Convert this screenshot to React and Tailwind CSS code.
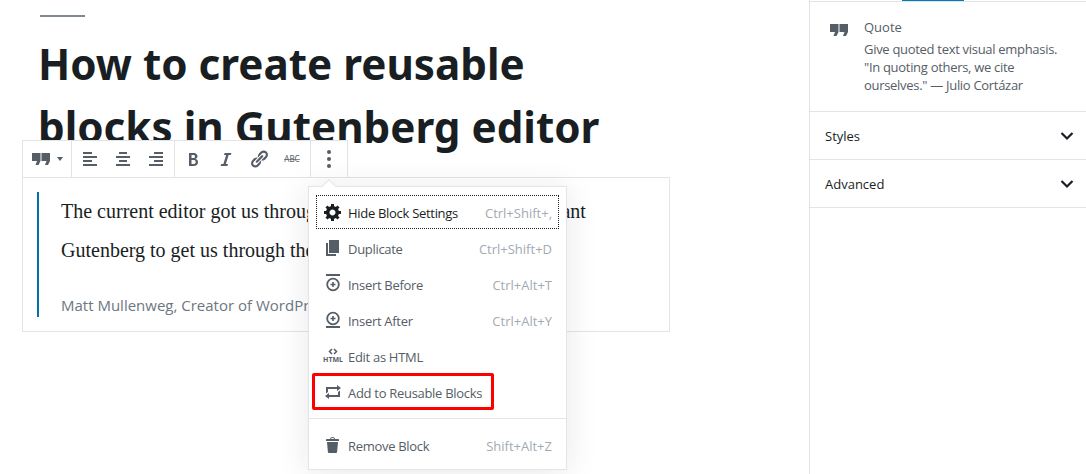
const Dash = ({ d, className = 'w-5 h-5 text-[#555d66]' }) => (
  <svg viewBox="0 0 20 20" className={className} fill="currentColor">
    <path d={d} />
  </svg>
);

const QUOTE = 'M1 4h8.5v8L7.5 16H4.5l1.5-4H1zM10.5 4H19v8l-2 4h-3l1.5-4h-5z';
const ALIGN_LEFT = 'M3 3h9v2H3zM3 7h14v2H3zM3 11h9v2H3zM3 15h14v2H3z';
const ALIGN_CENTER = 'M6 3h8v2H6zM3 7h14v2H3zM6 11h8v2H6zM3 15h14v2H3z';
const ALIGN_RIGHT = 'M8 3h9v2H8zM3 7h14v2H3zM8 11h9v2H8zM3 15h14v2H3z';
const BOLD = 'M6 4v13h4.54c1.37 0 2.46-.33 3.27-1 .8-.66 1.2-1.58 1.2-2.77 0-.84-.24-1.55-.72-2.12-.48-.56-1.13-.91-1.96-1.04v-.07c.63-.15 1.15-.47 1.55-.96.4-.49.6-1.08.6-1.78 0-.97-.36-1.7-1.07-2.2C12.7 4.02 11.9 4 10.7 4H6zm2.5 5.02V6h1.6c.87 0 1.9.16 1.9 1.47 0 1.14-.74 1.55-1.7 1.55H8.5zm0 5.98v-4h2c1.1 0 2.2.45 2.2 2 0 1.5-1 2-2.2 2h-2z';
const ITALIC = 'M14.78 6h-2.13l-2.8 9h2.12l-.62 2H4.6l.62-2h2.14l2.8-9H8.03l.62-2h6.75z';
const LINK = 'M17.74 2.76c1.68 1.69 1.68 4.41 0 6.1l-1.53 1.52c-1.12 1.12-2.7 1.47-4.14 1.09l2.62-2.61.76-.77.76-.76c.84-.84.84-2.2 0-3.04-.84-.85-2.2-.85-3.04 0l-.77.76-3.38 3.38c-.37-1.44-.02-3.02 1.1-4.14l1.52-1.53c1.69-1.68 4.42-1.68 6.1 0zM8.59 13.43l5.34-5.34c.42-.42.42-1.1 0-1.52-.44-.43-1.13-.39-1.53 0l-5.33 5.34c-.42.42-.42 1.1 0 1.52.44.43 1.13.39 1.52 0zm-.76 2.29l4.14-4.15c.38 1.44.03 3.02-1.09 4.14l-1.52 1.53c-1.69 1.68-4.41 1.68-6.1 0-1.68-1.68-1.68-4.42 0-6.1l1.53-1.52c1.12-1.12 2.7-1.47 4.14-1.1l-4.14 4.15c-.85.84-.85 2.2 0 3.05.84.84 2.2.84 3.04 0z';
const GEAR = 'M18 12h-2.18c-.17.7-.44 1.35-.81 1.93l1.54 1.54-2.1 2.1-1.54-1.54c-.58.36-1.23.63-1.91.79V19H8v-2.18c-.68-.16-1.33-.43-1.91-.79l-1.54 1.54-2.12-2.12 1.54-1.54c-.36-.58-.63-1.23-.79-1.91H1V9.03h2.17c.16-.7.44-1.35.8-1.94L2.43 5.55l2.1-2.1 1.54 1.54c.58-.37 1.24-.64 1.93-.81V2h3v2.18c.68.16 1.33.43 1.91.79l1.54-1.54 2.12 2.12-1.54 1.54c.36.59.64 1.24.8 1.94H18V12zm-8.5 1.5c1.66 0 3-1.34 3-3s-1.34-3-3-3-3 1.34-3 3 1.34 3 3 3z';
const DUPLICATE = 'M6 15V2h10v13H6zm-1 1h8v2H3V5h2v11z';
const REPEAT = 'M5 7v3l-2 1.5V5h11V3l4 3.01L14 9V7H5zm10 6v-3l2-1.5V15H6v2l-4-3.01L6 11v2h9z';
const TRASH = 'M12 4h3c.6 0 1 .4 1 1v1H3V5c0-.6.5-1 1-1h3c.2-1.1 1.3-2 2.5-2s2.3.9 2.5 2zM8 4h3c-.2-.6-.9-1-1.5-1S8.2 3.4 8 4zM4 7h11l-.9 10.1c0 .5-.5.9-1 .9H5.9c-.5 0-.9-.4-1-.9L4 7z';

const InsertIcon = ({ after }) => (
  <svg viewBox="0 0 20 20" className="w-5 h-5 text-[#555d66]" fill="none" stroke="currentColor">
    <path d={after ? 'M3 17h14' : 'M3 1h14'} strokeWidth="2" />
    <circle cx="10" cy={after ? 8.5 : 10.5} r="5.8" strokeWidth="1.8" />
    <path d={after ? 'M10 6v5M7.5 8.5h5' : 'M10 8v5M7.5 10.5h5'} strokeWidth="1.6" />
  </svg>
);

const HtmlIcon = () => (
  <svg viewBox="0 0 20 20" className="w-5 h-5 text-[#555d66]" fill="none" stroke="currentColor">
    <path d="M9 3L6.5 5.5 9 8M11 3l2.5 2.5L11 8" strokeWidth="1.5" />
    <text x="10" y="15.5" textAnchor="middle" fontSize="7" fontWeight="700" fill="currentColor" stroke="none" fontFamily="'Noto Sans', sans-serif">HTML</text>
  </svg>
);

const StrikeIcon = () => (
  <svg viewBox="0 0 20 20" className="w-5 h-5 text-[#555d66]" fill="currentColor">
    <text x="10" y="13" textAnchor="middle" fontSize="8" fontFamily="'Noto Sans', sans-serif">ABC</text>
    <path d="M2 10h16v.7H2z" />
  </svg>
);

const Chevron = () => (
  <svg viewBox="0 0 20 20" className="w-5 h-5 text-[#191e23]" fill="none" stroke="currentColor">
    <path d="M4.5 7l5.5 5.5L15.5 7" strokeWidth="2.2" />
  </svg>
);

const ToolButton = ({ d }) => (
  <div className="w-[33px] flex items-center justify-center">
    <Dash d={d} />
  </div>
);

const MenuItem = ({ icon, label, shortcut, focused }) => (
  <div
    className={`h-[34px] mb-[2px] mx-[7px] pl-[6px] pr-[6px] flex items-center border border-dotted ${
      focused ? 'border-[#191e23] text-[#191e23]' : 'border-transparent text-[#555d66]'
    }`}
  >
    <span className="w-5 h-5 flex items-center justify-center">{icon}</span>
    <span className="ml-[5px] pt-[2px] tracking-[-0.3px]">{label}</span>
    {shortcut && <span className="ml-auto pt-[2px] text-[#a2aab2]">{shortcut}</span>}
  </div>
);

const BlockMenu = () => (
  <div className="absolute left-[286px] top-[46px] w-[259px] bg-white border border-[#e2e4e7] shadow-[0_3px_30px_rgba(25,30,35,0.1)] text-[13px] leading-[18px]">
    <div className="absolute left-[15px] -top-[6px] w-[10px] h-[10px] rotate-45 bg-white border-l border-t border-[#e2e4e7]" />
    <div className="pt-[8px] pb-[7px] border-b border-[#e2e4e7]">
      <MenuItem focused icon={<Dash d={GEAR} className="w-5 h-5 text-[#191e23]" />} label="Hide Block Settings" shortcut="Ctrl+Shift+," />
      <MenuItem icon={<Dash d={DUPLICATE} />} label="Duplicate" shortcut="Ctrl+Shift+D" />
      <MenuItem icon={<InsertIcon />} label="Insert Before" shortcut="Ctrl+Alt+T" />
      <MenuItem icon={<InsertIcon after />} label="Insert After" shortcut="Ctrl+Alt+Y" />
      <MenuItem icon={<HtmlIcon />} label="Edit as HTML" />
      <MenuItem icon={<Dash d={REPEAT} />} label="Add to Reusable Blocks" />
    </div>
    <div className="pt-[9px] pb-[5px]">
      <MenuItem icon={<Dash d={TRASH} />} label="Remove Block" shortcut="Shift+Alt+Z" />
    </div>
    {/* red highlight from the screenshot annotation */}
    <div className="absolute left-[3px] top-[186px] w-[182px] h-[37px] border-[3px] border-[#ff0000] rounded-[2px]" />
  </div>
);

export default function App() {
  return (
    <div className="flex h-[474px] w-[1086px] overflow-hidden bg-white font-['Open_Sans',sans-serif]">
      {/* Editor */}
      <main className="w-[809px] pl-[22px]">
        <div className="ml-[18px] mt-[15px] w-[45px] h-[2px] bg-[#7e8993]" />
        <h1 className="ml-4 mt-[15px] w-[620px] font-['Noto_Sans',sans-serif] text-[42.2px] leading-[63px] font-bold text-[#191e23]">
          How to create reusable blocks in Gutenberg editor
        </h1>

        <div className="relative w-[648px] -mt-[18px]">
          <div className="relative flex h-[38px] w-[326px] bg-white border border-[#e2e4e7]">
            <div className="w-[49px] flex items-center pl-[8px] border-r border-[#e2e4e7]">
              <Dash d={QUOTE} />
              <span className="ml-[6px] w-0 h-0 border-x-[3px] border-x-transparent border-t-[4px] border-t-[#555d66]" />
            </div>
            <div className="flex w-[103px] px-[2px] border-r border-[#e2e4e7]">
              <ToolButton d={ALIGN_LEFT} />
              <ToolButton d={ALIGN_CENTER} />
              <ToolButton d={ALIGN_RIGHT} />
            </div>
            <div className="flex w-[136px] px-[2px] border-r border-[#e2e4e7]">
              <ToolButton d={BOLD} />
              <ToolButton d={ITALIC} />
              <ToolButton d={LINK} />
              <div className="w-[33px] flex items-center justify-center">
                <StrikeIcon />
              </div>
            </div>
            <div className="flex-1 flex flex-col items-center justify-center gap-[3px]">
              <span className="w-[4px] h-[4px] rounded-full bg-[#555d66]" />
              <span className="w-[4px] h-[4px] rounded-full bg-[#555d66]" />
              <span className="w-[4px] h-[4px] rounded-full bg-[#555d66]" />
            </div>
          </div>

          <div className="-mt-px h-[155px] border border-[#e2e4e7] pl-[14px] pt-[14px] bg-white">
            <blockquote className="h-[125px] border-l-2 border-[#0073aa] pl-[22px]">
              <p className="font-['Liberation_Serif',serif] text-[20px] leading-[39px] text-[#191e23] whitespace-nowrap">
                The current editor got us through the last eighteen years; we want
                <br />
                Gutenberg to get us through the next fifteen.
              </p>
              <p className="mt-[23px] text-[15px] leading-[24px] text-[#6c7781]">Matt Mullenweg, Creator of WordPress</p>
            </blockquote>
          </div>

          <BlockMenu />
        </div>
      </main>

      {/* Sidebar */}
      <aside className="w-[277px] border-l border-[#e2e4e7] text-[13px] leading-[18px]">
        <div className="h-[2px] border-b border-[#e2e4e7] pl-[92px]">
          <div className="w-[62px] h-px bg-[#007cba]" />
        </div>
        <div className="h-[110px] flex pl-[19px] pt-[16px] border-b border-[#e2e4e7]">
          <Dash d={QUOTE} className="w-5 h-5 mt-[2px] text-[#555d66]" />
          <div className="ml-[15px] text-[#555d66]">
            <div className="mb-[4px]">Quote</div>
            <p className="w-[200px] tracking-[-0.3px]">Give quoted text visual emphasis. "In quoting others, we cite ourselves." — Julio Cortázar</p>
          </div>
        </div>
        <div className="h-[48px] flex items-center justify-between pl-[15px] pr-[9px] border-b border-[#e2e4e7] text-[#191e23]">
          <span>Styles</span>
          <Chevron />
        </div>
        <div className="h-[48px] flex items-center justify-between pl-[15px] pr-[9px] border-b border-[#e2e4e7] text-[#191e23]">
          <span>Advanced</span>
          <Chevron />
        </div>
      </aside>
    </div>
  );
}
